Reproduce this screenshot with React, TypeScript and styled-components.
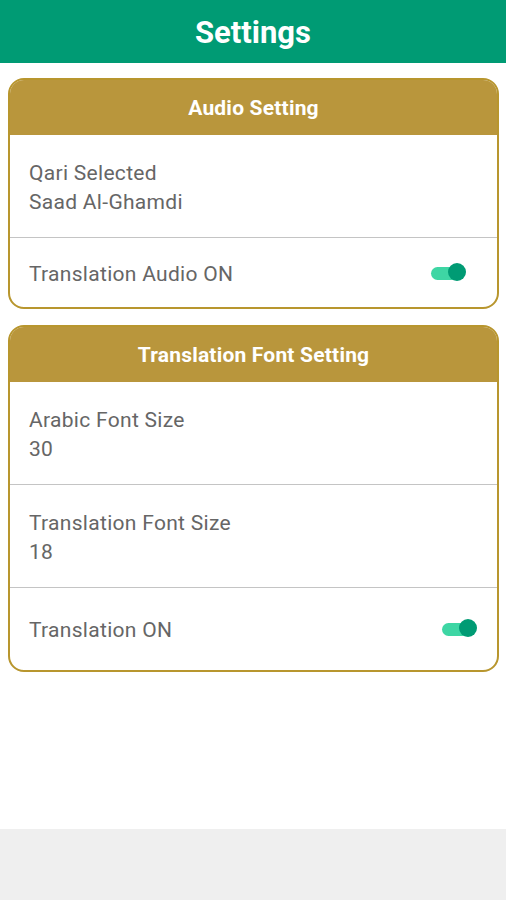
import React from 'react';
import styled, { createGlobalStyle } from 'styled-components';

const GlobalStyle = createGlobalStyle`
  * {
    box-sizing: border-box;
  }
  html, body {
    margin: 0;
    padding: 0;
    background: #ffffff;
    font-family: Roboto, "Noto Sans", "Liberation Sans", sans-serif;
  }
`;

const Screen = styled.div`
  display: flex;
  flex-direction: column;
  width: 506px;
  height: 900px;
  background: #ffffff;
`;

const TopBar = styled.div`
  display: flex;
  align-items: center;
  justify-content: center;
  height: 63px;
  padding-top: 2px;
  background-color: #009b74;
  color: #ffffff;
  font-size: 31px;
  font-weight: 700;
`;

const Content = styled.div`
  display: flex;
  flex-direction: column;
  gap: 16px;
  padding: 15px 7px 0 8px;
  flex: 1;
`;

const Card = styled.div`
  border: 2px solid #b8962e;
  border-radius: 16px;
  overflow: hidden;
  background: #ffffff;
`;

const CardHeader = styled.div`
  display: flex;
  align-items: center;
  justify-content: center;
  height: 55px;
  background-color: #b9963c;
  color: #ffffff;
  font-size: 21px;
  font-weight: 700;
  letter-spacing: 0.2px;
`;

const Row = styled.div<{ $height: number; $divider?: boolean }>`
  display: flex;
  align-items: center;
  justify-content: space-between;
  height: ${p => p.$height}px;
  padding: 3px 19px 0;
  border-bottom: ${p => (p.$divider ? '1px solid #c4c4c4' : 'none')};
  color: #666666;
  font-size: 21px;
  line-height: 29px;
  letter-spacing: 0.3px;
`;

const Texts = styled.div`
  display: flex;
  flex-direction: column;
`;

const Switch = styled.div<{ $offset: number }>`
  position: relative;
  width: 36px;
  height: 18px;
  margin-right: ${p => p.$offset}px;
  margin-top: -3px;

  .track {
    position: absolute;
    left: 0;
    top: 3px;
    width: 30px;
    height: 13px;
    border-radius: 7px;
    background: #3ed6a4;
  }

  .thumb {
    position: absolute;
    right: 1px;
    top: -1px;
    width: 18px;
    height: 18px;
    border-radius: 50%;
    background: #009b74;
  }
`;

const Footer = styled.div`
  height: 71px;
  background: #efefef;
`;

function Toggle({ offset }: { offset: number }) {
  return (
    <Switch $offset={offset}>
      <div className="track" />
      <div className="thumb" />
    </Switch>
  );
}

export default function App() {
  return (
    <Screen>
      <GlobalStyle />
      <TopBar>Settings</TopBar>
      <Content>
        <Card>
          <CardHeader>Audio Setting</CardHeader>
          <Row $height={103} $divider>
            <Texts>
              <span>Qari Selected</span>
              <span>Saad Al-Ghamdi</span>
            </Texts>
          </Row>
          <Row $height={69}>
            <span>Translation Audio ON</span>
            <Toggle offset={11} />
          </Row>
        </Card>
        <Card>
          <CardHeader>Translation Font Setting</CardHeader>
          <Row $height={103} $divider>
            <Texts>
              <span>Arabic Font Size</span>
              <span>30</span>
            </Texts>
          </Row>
          <Row $height={103} $divider>
            <Texts>
              <span>Translation Font Size</span>
              <span>18</span>
            </Texts>
          </Row>
          <Row $height={82}>
            <span>Translation ON</span>
            <Toggle offset={0} />
          </Row>
        </Card>
      </Content>
      <Footer />
    </Screen>
  );
}
